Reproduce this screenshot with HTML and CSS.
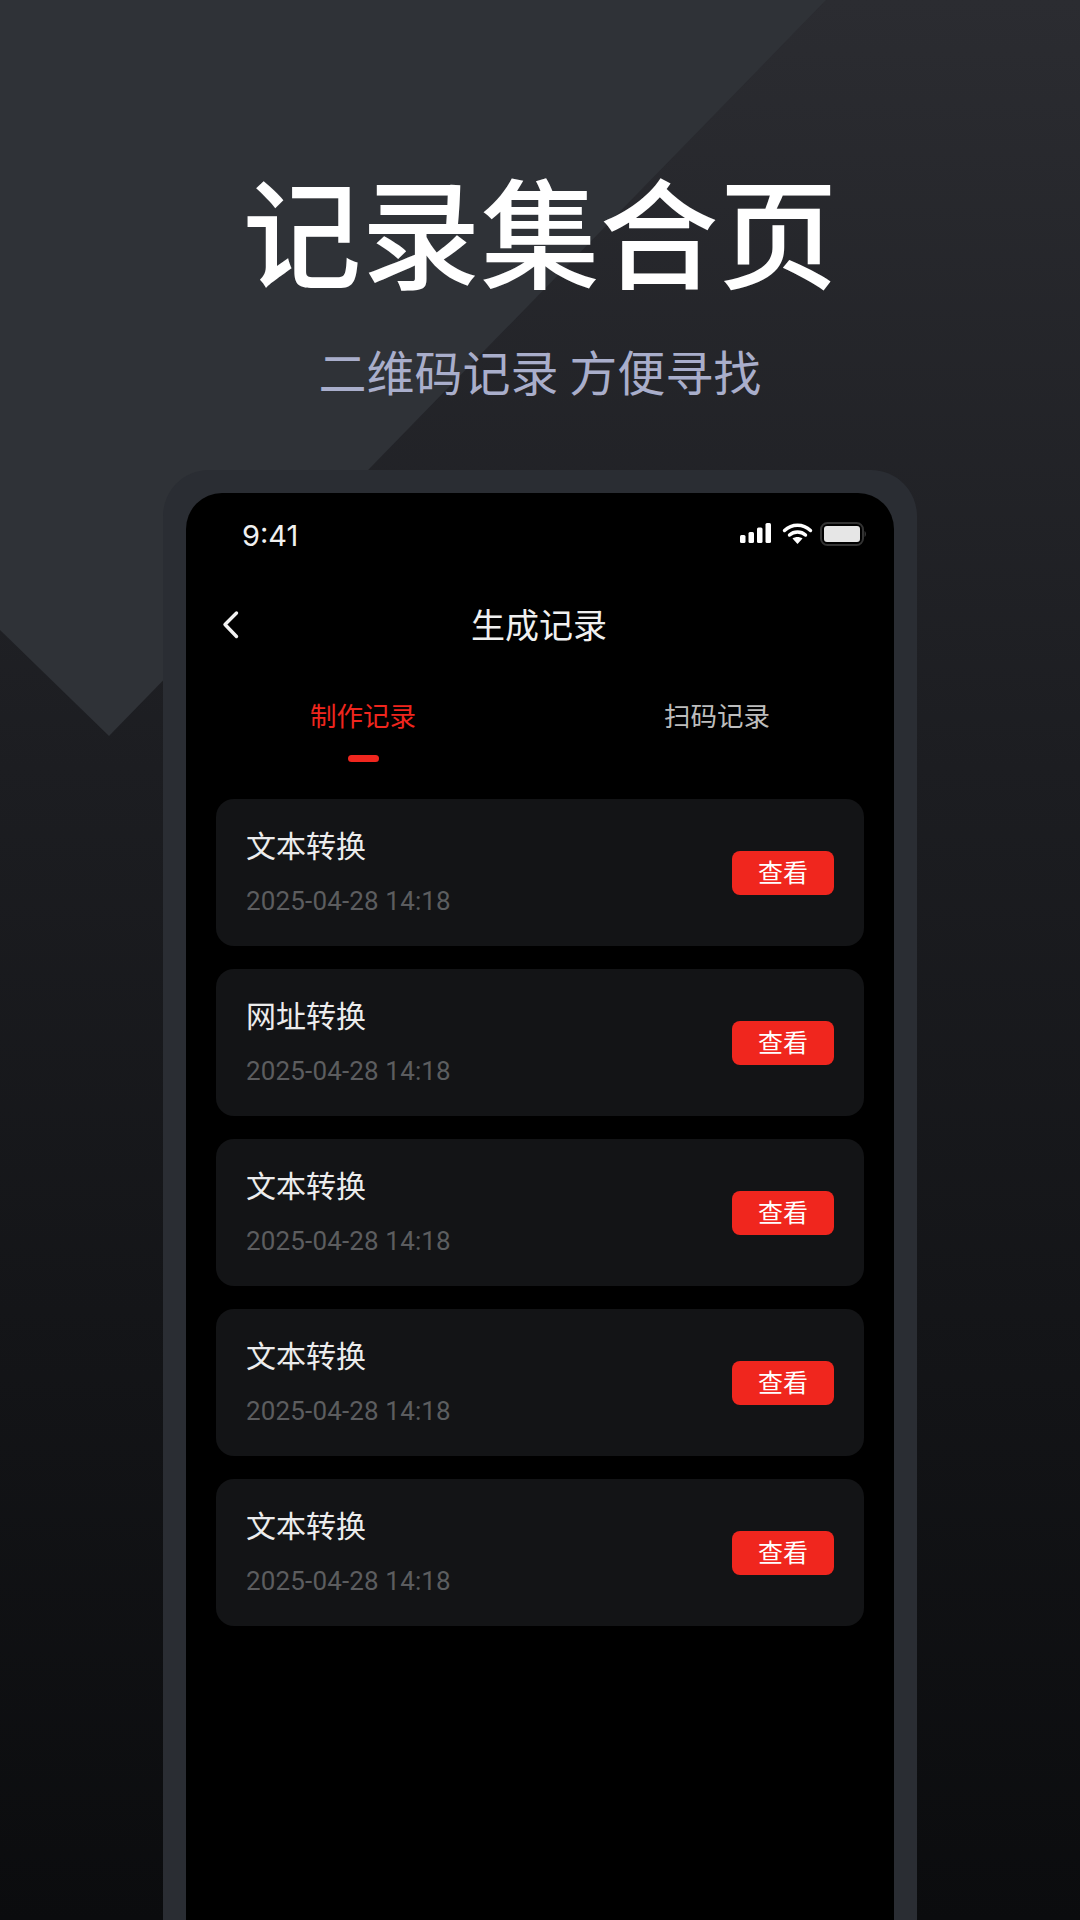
FILE: index.html
```html
<!DOCTYPE html>
<html lang="zh-CN">
<head>
  <meta charset="UTF-8">
  <meta name="viewport" content="width=device-width, initial-scale=1.0">
  <title>记录集合页</title>
  <link rel="stylesheet" href="styles.css">
</head>
<body>
  <div class="page">
    <div class="backdrop"></div>

    <header class="hero">
      <h1 class="hero-title">记录集合页</h1>
      <p class="hero-sub">二维码记录 方便寻找</p>
    </header>

    <div class="phone">
      <div class="screen">
        <div class="status">
          <span class="status-time">9:41</span>
          <svg class="status-icons" width="130" height="26" viewBox="0 0 130 26">
            <g fill="#fff">
              <rect x="2" y="13" width="5.500" height="8" rx="1.500"/>
              <rect x="10.500" y="10" width="5.500" height="11" rx="1.500"/>
              <rect x="19" y="5.500" width="5.500" height="15.500" rx="1.500"/>
              <rect x="27.500" y="1" width="5.500" height="20" rx="1.500"/>
            </g>
            <g fill="none" stroke="#fff" stroke-width="3.400" stroke-linecap="round">
              <path d="M46.500 8.500 C54 1.500 65 1.500 72.500 8.500"/>
              <path d="M51.500 13 C56 9 63 9 67.500 13"/>
            </g>
            <path d="M54.500 16.500 C57.500 14.500 61.500 14.500 64.500 16.500 L59.500 22 Z" fill="#fff"/>
            <rect x="83" y="1" width="42" height="22" rx="6.500" fill="none" stroke="#333" stroke-width="2"/>
            <rect x="86" y="4" width="36" height="16" rx="3" fill="#e6e6e6"/>
            <path d="M126.500 9 C128.500 10 128.500 14 126.500 15 Z" fill="#333"/>
          </svg>
        </div>

        <div class="nav">
          <svg class="nav-back" width="20" height="30" viewBox="0 0 20 30">
            <path d="M15.500 3 L4 14.500 L15.500 26.500" fill="none" stroke="#f2f2f2" stroke-width="3.400" stroke-linecap="round" stroke-linejoin="round"/>
          </svg>
          <div class="nav-title">生成记录</div>
        </div>

        <div class="tabs">
          <div class="tab active">制作记录<span class="tab-bar"></span></div>
          <div class="tab">扫码记录<span class="tab-bar"></span></div>
        </div>

        <div class="list">
          <div class="card">
            <div class="card-text">
              <div class="card-name">文本转换</div>
              <div class="card-date">2025-04-28 14:18</div>
            </div>
            <div class="card-btn">查看</div>
          </div>
          <div class="card">
            <div class="card-text">
              <div class="card-name">网址转换</div>
              <div class="card-date">2025-04-28 14:18</div>
            </div>
            <div class="card-btn">查看</div>
          </div>
          <div class="card">
            <div class="card-text">
              <div class="card-name">文本转换</div>
              <div class="card-date">2025-04-28 14:18</div>
            </div>
            <div class="card-btn">查看</div>
          </div>
          <div class="card">
            <div class="card-text">
              <div class="card-name">文本转换</div>
              <div class="card-date">2025-04-28 14:18</div>
            </div>
            <div class="card-btn">查看</div>
          </div>
          <div class="card">
            <div class="card-text">
              <div class="card-name">文本转换</div>
              <div class="card-date">2025-04-28 14:18</div>
            </div>
            <div class="card-btn">查看</div>
          </div>
        </div>
      </div>
    </div>
  </div>
</body>
</html>
```

FILE: styles.css
```css
* {
  box-sizing: border-box;
}
body {
  margin: 0;
  background: #0b0c0e;
  font-family: "Noto Sans CJK SC", "Noto Sans", sans-serif;
}
.page {
  position: relative;
  display: flex;
  flex-direction: column;
  width: 1080px;
  height: 1920px;
  overflow: hidden;
  background: linear-gradient(180deg, #2b2c31 0%, #1c1d21 40%, #0b0c0e 100%);
}
.backdrop {
  position: absolute;
  top: 0;
  left: 0;
  width: 830px;
  height: 740px;
  background: #2f3237;
  clip-path: polygon(0 0, 826px 0, 109px 736px, 0 630px);
}
.hero {
  position: relative;
  height: 470px;
  padding-top: 168px;
  text-align: center;
}
.hero-title {
  margin: 0;
  font-size: 119px;
  line-height: 120px;
  font-weight: 500;
  color: #fff;
}
.hero-sub {
  margin: 52px 0 0;
  font-size: 48px;
  line-height: 60px;
  font-weight: 400;
  color: #a9aecb;
}
.phone {
  position: relative;
  flex: 1;
  width: 754px;
  margin: 0 auto;
  padding: 23px 23px 0;
  background: #2a2d33;
  border-radius: 46px 46px 0 0;
}
.screen {
  height: 100%;
  background: #000;
  border-radius: 36px 36px 0 0;
}
.status {
  display: flex;
  align-items: center;
  justify-content: space-between;
  height: 84px;
  padding: 0 26px 0 56px;
}
.status-time {
  font-family: "Inter", "Liberation Sans", sans-serif;
  font-size: 29px;
  font-weight: 400;
  color: #f0f0f0;
}
.nav {
  display: flex;
  align-items: center;
  justify-content: center;
  position: relative;
  height: 96px;
  padding: 0 2px 4px 0;
}
.nav-back {
  position: absolute;
  left: 35px;
  top: 33px;
}
.nav-title {
  font-size: 34px;
  font-weight: 400;
  color: #f0f0f0;
}
.tabs {
  display: grid;
  grid-template-columns: 1fr 1fr;
}
.tab {
  display: flex;
  flex-direction: column;
  align-items: center;
  gap: 20px;
  padding-top: 22px;
  font-size: 26.500px;
  line-height: 40px;
  color: #bdbdbd;
}
.tab-bar {
  width: 31px;
  height: 7px;
  border-radius: 4px;
}
.tab.active {
  color: #f0261e;
}
.tab.active .tab-bar {
  background: #f0261e;
}
.list {
  display: flex;
  flex-direction: column;
  gap: 23px;
  margin-top: 37px;
  padding: 0 30px;
}
.card {
  display: flex;
  align-items: center;
  justify-content: space-between;
  height: 147px;
  padding: 0 30px;
  background: #131416;
  border-radius: 18px;
}
.card-text {
  display: flex;
  flex-direction: column;
  gap: 19px;
  margin-bottom: 2px;
}
.card-name {
  font-size: 30px;
  line-height: 40px;
  color: #ececec;
}
.card-date {
  font-family: "Roboto", "Liberation Sans", sans-serif;
  font-size: 26px;
  line-height: 36px;
  letter-spacing: 0.15px;
  color: #5c5d5f;
}
.card-btn {
  width: 102px;
  height: 44px;
  padding-bottom: 4px;
  font-size: 25px;
  line-height: 40px;
  text-align: center;
  color: #fff;
  background: #f0261e;
  border-radius: 8px;
}
```
